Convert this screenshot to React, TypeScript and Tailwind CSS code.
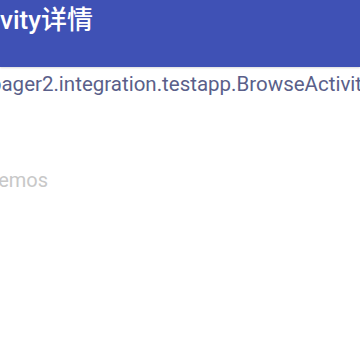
export default function App() {
  return (
    <div className="w-[360px] h-[360px] overflow-hidden bg-white font-['Roboto','Noto_Sans_CJK_SC',sans-serif]">
      {/* Toolbar */}
      <div className="h-[67px] bg-[#3f51b5] shadow-[0_1px_2px_rgba(0,0,0,0.15)] overflow-hidden">
        <div className="whitespace-nowrap flex justify-end w-[93px] pt-[3px] text-[26px] leading-[34px] font-medium text-white">
          <span className="shrink-0">BrowseActivity详情</span>
        </div>
      </div>
      {/* Content */}
      <div className="overflow-hidden">
        <div className="flex justify-end w-[362px] whitespace-nowrap pt-[4px] text-[20.5px] leading-[26px] text-[#5a5f8a]">
          <span className="shrink-0">androidx.viewpager2.integration.testapp.BrowseActivit</span>
        </div>
        <div className="flex justify-end w-[48px] whitespace-nowrap mt-[70px] text-[20px] leading-[26px] text-[#c8c8c8]">
          <span className="shrink-0">Demos</span>
        </div>
      </div>
    </div>
  );
}
